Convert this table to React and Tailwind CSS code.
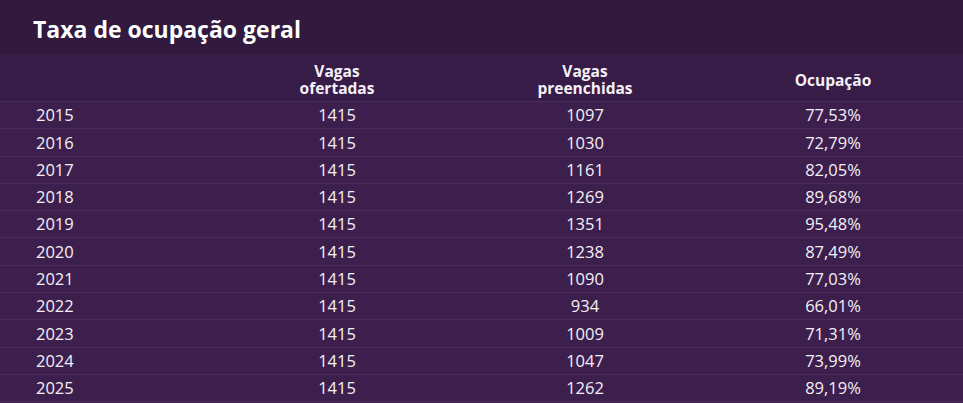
import React from "react";

const rows = [
  ["2015", "1415", "1097", "77,53%"],
  ["2016", "1415", "1030", "72,79%"],
  ["2017", "1415", "1161", "82,05%"],
  ["2018", "1415", "1269", "89,68%"],
  ["2019", "1415", "1351", "95,48%"],
  ["2020", "1415", "1238", "87,49%"],
  ["2021", "1415", "1090", "77,03%"],
  ["2022", "1415", "934", "66,01%"],
  ["2023", "1415", "1009", "71,31%"],
  ["2024", "1415", "1047", "73,99%"],
  ["2025", "1415", "1262", "89,19%"],
];

export default function App() {
  return (
    <div
      className="w-[963px] h-[403px] bg-[#3d1f4d] text-[#f4f0f6] overflow-hidden"
      style={{ fontFamily: '"Open Sans", "Noto Sans", sans-serif' }}
    >
      <div className="h-[54px] bg-[#311a3e] flex items-center pl-[33px] pt-[4px]">
        <h1 className="text-[23px] font-bold text-white">Taxa de ocupação geral</h1>
      </div>
      <div className="flex h-[48px] bg-[#371c47] text-[15.5px] font-bold leading-[17px] items-center pt-[5px] border-b border-[#4a2b5c]">
        <div className="w-[213px]"></div>
        <div className="w-[248px] text-center">Vagas<br />ofertadas</div>
        <div className="w-[248px] text-center">Vagas<br />preenchidas</div>
        <div className="w-[248px] text-center">Ocupação</div>
      </div>
      {rows.map((r) => (
        <div key={r[0]} className="flex h-[27.3px] items-center pt-[1px] border-b border-[#4a2b5c] text-[16.5px]">
          <div className="w-[213px] pl-[36px]">{r[0]}</div>
          <div className="w-[248px] text-center">{r[1]}</div>
          <div className="w-[248px] text-center">{r[2]}</div>
          <div className="w-[248px] text-center">{r[3]}</div>
        </div>
      ))}
    </div>
  );
}
